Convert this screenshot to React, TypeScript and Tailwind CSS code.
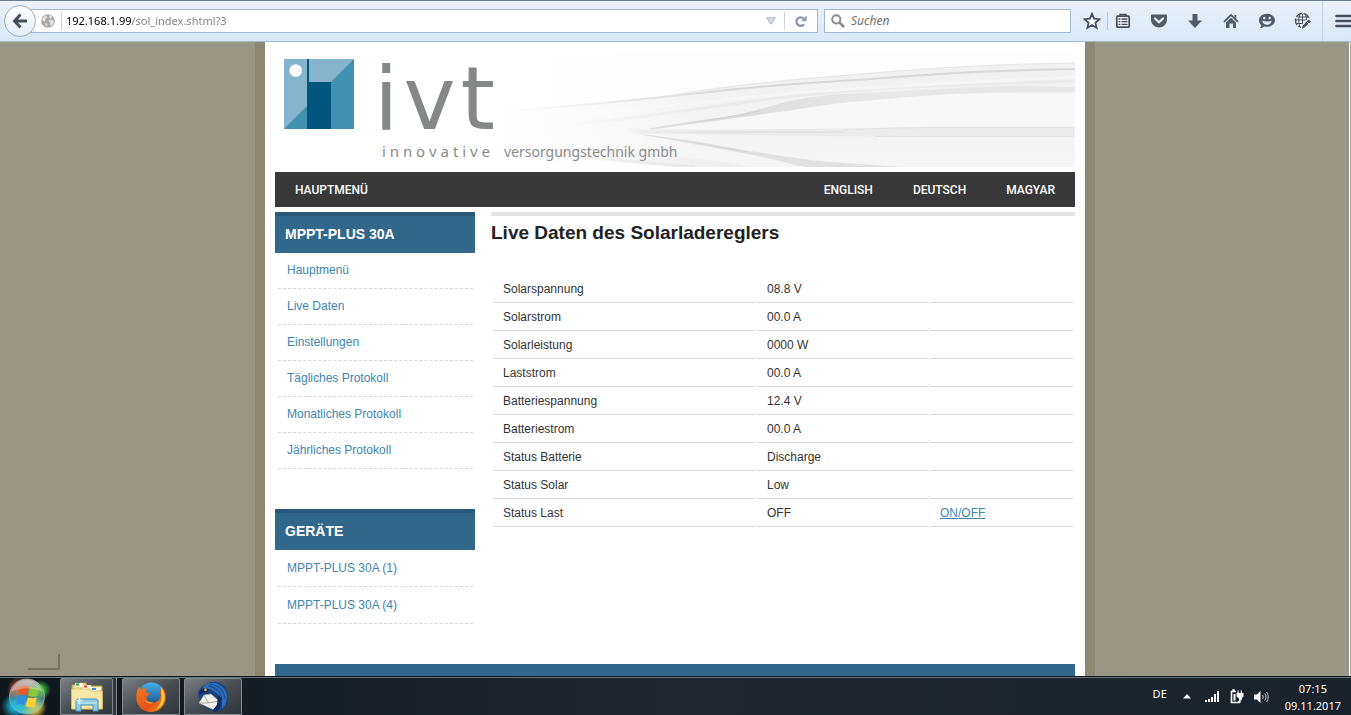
import React, { useState } from 'react';

const NAV_LANGUAGES = ['ENGLISH', 'DEUTSCH', 'MAGYAR'];

const MENU_ITEMS = [
  'Hauptmenü',
  'Live Daten',
  'Einstellungen',
  'Tägliches Protokoll',
  'Monatliches Protokoll',
  'Jährliches Protokoll',
];

const DEVICES = ['MPPT-PLUS 30A (1)', 'MPPT-PLUS 30A (4)'];

const LIVE_DATA = [
  { label: 'Solarspannung', value: '08.8 V' },
  { label: 'Solarstrom', value: '00.0 A' },
  { label: 'Solarleistung', value: '0000 W' },
  { label: 'Laststrom', value: '00.0 A' },
  { label: 'Batteriespannung', value: '12.4 V' },
  { label: 'Batteriestrom', value: '00.0 A' },
  { label: 'Status Batterie', value: 'Discharge' },
  { label: 'Status Solar', value: 'Low' },
  { label: 'Status Last', value: 'OFF', action: 'ON/OFF' },
];

/* ---------- Toolbar icons ---------- */

const BackIcon = () => (
  <svg width="16" height="16" viewBox="0 0 16 16" fill="none" stroke="#46505c" strokeWidth="3">
    <path d="M8.5 1.5 2.5 8l6 6.5M3 8h12" />
  </svg>
);

const GlobeIcon = () => (
  <svg width="14" height="14" viewBox="0 0 14 14">
    <circle cx="7" cy="7" r="6.8" fill="#a8a8a8" />
    <path d="M1 5.5 3 2.500 5.500 1.500 6 3.500 4 5.500 4.500 7 2.500 7.500ZM8 1l3.500 1.500L10 4.500 8.500 4ZM7.500 6.500l3-1 2.500 2-1.500 3.500-2 .5-.5-3ZM3.500 9l2.500.5.500 2-1 1Z" fill="#e6e6e6" />
  </svg>
);

const DropmarkerIcon = () => (
  <svg width="10" height="8" viewBox="0 0 10 8">
    <path d="M.7.8h8.600L5 7.200Z" fill="#d9dfe6" stroke="#aab5c1" />
  </svg>
);

const ReloadIcon = () => (
  <svg width="12" height="13" viewBox="0 0 12 13">
    <path d="M9 9.200A4.200 4.200 0 1 1 8.600 3.600" fill="none" stroke="#8d9baa" strokeWidth="2.400" />
    <path d="M11.600.6v5.600H6Z" fill="#8d9baa" />
  </svg>
);

const SearchIcon = () => (
  <svg width="14" height="14" viewBox="0 0 14 14" fill="none" stroke="#8e8e8e">
    <circle cx="5.300" cy="5.300" r="4.100" strokeWidth="2" />
    <path d="m8.500 8.500 4.500 4.500" strokeWidth="2.600" />
  </svg>
);

const StarIcon = () => (
  <svg width="18" height="18" viewBox="0 0 18 18">
    <path d="m9 1.800 2.100 4.900 5.300.5-4 3.500 1.200 5.200L9 13.100l-4.600 2.800 1.200-5.200-4-3.500 5.300-.5Z" fill="#fafcfe" stroke="#46505c" strokeWidth="1.800" />
  </svg>
);

const ListIcon = () => (
  <svg width="16" height="16" viewBox="0 0 16 16">
    <path d="M5 3V1.500h6V3" fill="none" stroke="#46505c" strokeWidth="1.500" />
    <rect x="1.800" y="3.200" width="12.400" height="11" rx="1" fill="#f2f6fa" stroke="#46505c" strokeWidth="1.700" />
    <path d="M3.500 6h2M6.500 6h6M3.500 8.700h2M6.500 8.700h6M3.500 11.400h2M6.500 11.400h6" stroke="#46505c" strokeWidth="1.300" />
  </svg>
);

const PocketIcon = () => (
  <svg width="18" height="16" viewBox="0 0 18 16">
    <path d="M2 1.500h14a1 1 0 0 1 1 1V7a8 7.500 0 0 1-16 0V2.500a1 1 0 0 1 1-1Z" fill="#4f5b67" />
    <path d="m5 5.500 4 3.800 4-3.800" fill="none" stroke="#eaf2fa" strokeWidth="2.200" strokeLinecap="round" />
  </svg>
);

const DownloadIcon = () => (
  <svg width="16" height="16" viewBox="0 0 16 16">
    <path d="M5.500 1h5v6.500H15L8 15 1 7.500h4.500Z" fill="#4f5b67" />
  </svg>
);

const HomeIcon = () => (
  <svg width="16" height="16" viewBox="0 0 16 16">
    <path d="M1 8.800 8 2l7 6.800" fill="none" stroke="#46505c" strokeWidth="1.700" />
    <path d="M8 4.800 13 9.600V15h-3v-4.500H6.500V15H3V9.600ZM11.500 2h1.800v3.500l-1.800-1.700Z" fill="#4f5b67" />
  </svg>
);

const SmileIcon = () => (
  <svg width="18" height="16" viewBox="0 0 18 16">
    <path d="M9 .8c4.500 0 8 2.800 8 6.500s-3.500 6.500-8 6.500c-1 0-2-.1-2.900-.4-1 1-2.600 1.600-4.100 1.600.7-.8 1.200-1.900 1.200-2.900C1.700 10.900 1 9.200 1 7.300 1 3.600 4.500.8 9 .8Z" fill="#4f5b67" />
    <path d="M4.300 7.800c2.800 1 6.600 1 9.400 0-.5 2.500-2.300 3.900-4.700 3.900S4.800 10.300 4.300 7.800Z" fill="#e4edf6" />
    <circle cx="6.300" cy="5" r="1.200" fill="#e4edf6" />
    <circle cx="11.700" cy="5" r="1.200" fill="#e4edf6" />
  </svg>
);

const GlobePenIcon = () => (
  <svg width="18" height="18" viewBox="0 0 18 18">
    <circle cx="8.500" cy="8.500" r="7" fill="#eef4fa" stroke="#46505c" strokeWidth="1.400" strokeDasharray="7 1.500" />
    <path d="M2 8h13.500M3.500 5h11M3 11.500h8M8.500 2v13M5.800 2.500c-1.400 4-1.400 8 0 12M11.500 2.500c1.200 3 1.300 6 .5 8" fill="none" stroke="#46505c" />
    <path d="M14.500 6.500 18 9.500l-6.500 6L7 18l1-4.500Z" fill="#46505c" stroke="#eef4fa" strokeWidth="1.200" />
    <path d="m13 10 2 2" stroke="#eef4fa" />
  </svg>
);

const MenuIcon = () => (
  <svg width="18" height="14" viewBox="0 0 18 14" className="shrink-0" stroke="#46505c" strokeWidth="2.500" strokeLinecap="round">
    <path d="M1.500 2h15M1.500 7h15M1.500 12h15" />
  </svg>
);

const TOOLBAR_ACTIONS = [
  { name: 'Lesezeichen anzeigen', icon: <ListIcon /> },
  { name: 'Pocket', icon: <PocketIcon /> },
  { name: 'Downloads', icon: <DownloadIcon /> },
  { name: 'Startseite', icon: <HomeIcon /> },
  { name: 'Chat', icon: <SmileIcon /> },
  { name: 'Web-Werkzeuge', icon: <GlobePenIcon /> },
];

const BrowserToolbar = () => {
  const [url, setUrl] = useState('192.168.1.99/sol_index.shtml?3');
  const [query, setQuery] = useState('');

  return (
    <header className="flex h-[42px] shrink-0 items-center overflow-hidden border-t border-b border-t-[#6c7c94] border-b-[#a6bcd2] bg-linear-to-b from-[#eaf1fb] to-[#d9e8f7] pl-1 font-['Noto_Sans','Open_Sans',sans-serif] text-xs">
      <button aria-label="Zurück" className="z-10 flex size-8 shrink-0 items-center justify-center rounded-full border border-[#9aaec4] bg-linear-to-b from-white to-[#e3edf8]">
        <BackIcon />
      </button>
      <div className="-ml-2 flex h-6 min-w-0 flex-1 items-center border border-[#a3b9d0] bg-white pl-3">
        <GlobeIcon />
        <span className="mr-1 ml-1.5 h-[18px] w-px bg-[#cfd3d8]" />
        <input
          type="text"
          aria-label="Adresse"
          value={url}
          onChange={(e) => setUrl(e.target.value)}
          className="min-w-0 flex-1 bg-[linear-gradient(to_right,#000_65px,#7d7d7d_65px)] bg-clip-text text-[11px] text-transparent outline-none"
        />
        <button aria-label="Verlauf" className="px-2">
          <DropmarkerIcon />
        </button>
        <span className="h-[18px] w-px bg-[#cfd3d8]" />
        <button aria-label="Neu laden" className="flex w-8 justify-center">
          <ReloadIcon />
        </button>
      </div>
      <div className="ml-1.5 flex h-6 w-[247px] shrink-0 items-center gap-1.5 border border-[#a3b9d0] bg-white pl-1.5">
        <SearchIcon />
        <input
          type="text"
          aria-label="Suchen"
          placeholder="Suchen"
          value={query}
          onChange={(e) => setQuery(e.target.value)}
          className="min-w-0 flex-1 outline-none placeholder:text-[#6f6f6f] placeholder:italic"
        />
      </div>
      <button aria-label="Lesezeichen hinzufügen" className="ml-1.5 flex w-[30px] shrink-0 justify-center">
        <StarIcon />
      </button>
      <span className="h-[18px] w-px shrink-0 bg-[#b4c6da]" />
      <div className="flex shrink-0 gap-1.5">
        {TOOLBAR_ACTIONS.map((action) => (
          <button key={action.name} aria-label={action.name} className="flex h-5 w-[30px] items-center justify-center">
            {action.icon}
          </button>
        ))}
      </div>
      <span className="ml-1 h-full w-px shrink-0 bg-[#c2d2e4]" />
      <button aria-label="Menü öffnen" className="flex w-7 shrink-0 pl-3">
        <MenuIcon />
      </button>
    </header>
  );
};

/* ---------- Page header ---------- */

const BannerWaves = () => (
  <svg className="absolute inset-0 size-full" viewBox="0 0 800 115" preserveAspectRatio="none">
    <defs>
      <linearGradient id="waveFade" x1="220" x2="450" y1="0" y2="0" gradientUnits="userSpaceOnUse">
        <stop offset="0" stopColor="#fff" />
        <stop offset="1" stopColor="#fff" stopOpacity="0" />
      </linearGradient>
      <linearGradient id="waveBody" x1="0" x2="0" y1="0" y2="1">
        <stop offset="0" stopColor="#f1f1f1" />
        <stop offset="1" stopColor="#f6f6f6" />
      </linearGradient>
      <linearGradient id="bandFill" x1="358" x2="600" y1="0" y2="0" gradientUnits="userSpaceOnUse">
        <stop offset="0" stopColor="#dcdcdc" />
        <stop offset=".5" stopColor="#dedede" />
        <stop offset="1" stopColor="#e7e7e7" />
      </linearGradient>
    </defs>
    <rect width="800" height="115" fill="#fdfdfd" />
    <path d="M200 62C262 57 340 49 397 43C420 40 430 38 443 36C480 31 515 28 550 25S620 19 665 16S750 12 800 11V115H410C360 113 290 106 220 98Z" fill="url(#waveBody)" />
    <path d="M397 43C430 37 500 29 550 25S620 19 665 16S750 12 800 11" fill="none" stroke="#e6e6e6" />
    <path d="M200 62C262 57 340 50 397 44C412 42 428 41 443 39C480 35 515 32 550 30S620 25 665 22S750 18 800 17" fill="none" stroke="#d9d9d9" strokeWidth="2" />
    <path d="M300 72C370 66 440 53 520 44S700 32 800 29" fill="none" stroke="#ebebeb" strokeWidth="3" />
    <path d="M300 63C370 57 440 48 520 41S700 30 800 25" fill="none" stroke="#f6f6f6" strokeWidth="3" />
    <path d="M358 80C420 72 470 63 489 61C505 58 515 58 531 56C550 52 570 50 588 49C630 44 665 42 703 41H800V76H660C560 79 450 80 358 80Z" fill="#f8f8f8" />
    <path d="M358 80C380 75 400 73 420 69C440 66 460 64 473 60C495 55 510 49 531 46S565 42 588 41S690 35 741 34L800 35V40C760 40 730 40 703 41C665 42 630 45 588 49C570 50 550 53 531 56C510 60 500 60 489 62C470 65 390 76 358 80Z" fill="url(#bandFill)" />
    <path d="M370 78C410 70 450 67 485 59" fill="none" stroke="#d2d2d2" />
    <path d="M350 76.500C480 79 560 75.500 660 75.500H799V85H640C560 84 480 83 360 82Z" fill="#ebebeb" />
    <path d="M365 80H569" fill="none" stroke="#dcdcdc" />
    <path d="M569 78C610 76 640 75.500 680 75.500H798.500V84.500H600" fill="none" stroke="#e2e2e2" />
    <path d="M358 81C380 84 400 86 420 89C440 93 458 96 473 99C490 101 500 103 512 105C530 107 540 109 550 109.500C580 112 600 113 626 115H531C515 112 505 109 492 106C460 99 400 89 358 81Z" fill="#e1e1e1" />
    <path d="M370 83C400 87 440 94 473 100" fill="none" stroke="#d4d4d4" />
    <path d="M270 94C350 98 440 108 480 115H410C360 111 310 106 270 102Z" fill="#efefef" />
    <path d="M270 101C320 106 360 110 420 115" fill="none" stroke="#e4e4e4" strokeWidth="3" />
    <rect width="450" height="115" fill="url(#waveFade)" />
  </svg>
);

const LogoMark = () => (
  <svg width="70" height="70" viewBox="0 0 70 70" className="shrink-0">
    <rect width="70" height="70" fill="#86b4cd" />
    <path d="M70 0v70H47V23ZM0 70l23-23v23Z" fill="#4391b0" />
    <path d="M23 0h2v23h22v47H23Z" fill="#00557c" />
    <circle cx="11.700" cy="11.500" r="6.300" fill="#fff" />
  </svg>
);

const Banner = () => (
  <div className="relative h-[115px]">
    <BannerWaves />
    <div className="relative flex gap-5 pt-[7px] pl-[9px] text-[#868789]">
      <LogoMark />
      <div>
        <div className="flex h-[82px] gap-[5px] font-['DejaVu_Sans',Verdana,sans-serif] text-[88px] leading-[80px]">
          <span>i</span>
          <span>v</span>
          <span>t</span>
        </div>
        <p className="flex items-baseline gap-3.5 pl-2 font-['Noto_Sans','Open_Sans',sans-serif] text-sm leading-5 text-[#8a8b8d]">
          <span className="text-[15px]">i n n o v a t i v e</span>
          <span>versorgungstechnik gmbh</span>
        </p>
      </div>
    </div>
  </div>
);

const NavBar = () => (
  <nav className="mt-[5px] flex h-[35px] items-center bg-[#383838] px-5 font-[Roboto,'Open_Sans',sans-serif] text-xs font-medium text-white">
    <a href="#hauptmenu" className="mr-auto">HAUPTMENÜ</a>
    <div className="flex gap-10">
      {NAV_LANGUAGES.map((lang) => (
        <a key={lang} href={`#${lang.toLowerCase()}`}>{lang}</a>
      ))}
    </div>
  </nav>
);

/* ---------- Sidebar ---------- */

interface SideMenuProps {
  title: string;
  items: string[];
  roomy?: boolean;
}

const SideMenu: React.FC<SideMenuProps> = ({ title, items, roomy }) => (
  <section className="mb-10">
    <h2 className="border-t-4 border-[#2a5878] bg-[#31678a] px-2.5 pt-2 pb-2 text-sm leading-[21px] font-bold text-white">{title}</h2>
    <ul className="pr-0.5 pl-[3px] text-xs">
      {items.map((item) => (
        <li key={item} className="border-b border-dashed border-[#d8d8d8]">
          <a href="#item" className={`block px-[9px] pb-2.5 leading-4 text-[#4186ad] ${roomy ? 'pt-2.5' : 'pt-[9px]'}`}>{item}</a>
        </li>
      ))}
    </ul>
  </section>
);

/* ---------- Live data ---------- */

const LiveDataTable = () => (
  <table className="w-full table-fixed border-separate border-spacing-[2px] text-xs text-[#333]">
    <colgroup>
      <col className="w-[262px]" />
      <col className="w-[171px]" />
      <col />
    </colgroup>
    <tbody>
      {LIVE_DATA.map((row) => (
        <tr key={row.label}>
          <td className="border-b border-[#dadada] px-2.5 pt-1 pb-[5px] leading-4">{row.label}</td>
          <td className="border-b border-[#dadada] px-2.5 pt-1 pb-[5px] leading-4">{row.value}</td>
          <td className="border-b border-[#dadada] px-2.5 pt-1 pb-[5px] leading-4">
            {row.action && <a href="#toggle" className="text-[#4186ad] underline">{row.action}</a>}
          </td>
        </tr>
      ))}
    </tbody>
  </table>
);

/* ---------- Taskbar ---------- */

const StartOrb = () => (
  <svg width="56" height="38" viewBox="0 0 56 38">
    <defs>
      <radialGradient id="glowRed"><stop offset="0" stopColor="#f0603a" /><stop offset="1" stopColor="#f0603a" stopOpacity="0" /></radialGradient>
      <radialGradient id="glowGreen"><stop offset="0" stopColor="#3fe03a" /><stop offset="1" stopColor="#3fe03a" stopOpacity="0" /></radialGradient>
      <radialGradient id="glowBlue"><stop offset="0" stopColor="#18c8f0" /><stop offset="1" stopColor="#18c8f0" stopOpacity="0" /></radialGradient>
      <radialGradient id="glowYellow"><stop offset="0" stopColor="#ffe040" /><stop offset="1" stopColor="#ffe040" stopOpacity="0" /></radialGradient>
      <linearGradient id="orb" x1="0" y1="0" x2="0" y2="1">
        <stop offset="0" stopColor="#b9a6a0" />
        <stop offset=".45" stopColor="#6f8078" />
        <stop offset=".55" stopColor="#3f7f86" />
        <stop offset="1" stopColor="#5fc6c8" />
      </linearGradient>
    </defs>
    <circle cx="20" cy="11" r="13" fill="url(#glowRed)" />
    <circle cx="41" cy="12" r="10" fill="url(#glowGreen)" />
    <circle cx="15" cy="28" r="14" fill="url(#glowBlue)" />
    <circle cx="34" cy="29" r="13" fill="url(#glowYellow)" />
    <circle cx="27" cy="18.500" r="17.500" fill="url(#orb)" stroke="#a7b8b4" strokeOpacity=".7" />
    <circle cx="18" cy="12" r="10" fill="url(#glowRed)" opacity=".6" />
    <circle cx="38" cy="13" r="9" fill="url(#glowGreen)" opacity=".7" />
    <circle cx="18" cy="27" r="12" fill="url(#glowBlue)" opacity=".8" />
    <circle cx="34" cy="29" r="11" fill="url(#glowYellow)" opacity=".7" />
    <path d="M20.500 8.500c3-1.500 6-1.300 8.500.2l-2.200 8.300c-2.700-1.300-5.500-1.300-8.300-.1Z" fill="#ee5a24" />
    <path d="M30.200 9.300c3 1.500 6 1.500 9.300.2L37.200 18c-3 1.200-6 1.100-9.100-.3Z" fill="#8cc63f" />
    <path d="M18.200 18.300c2.800-1.300 5.500-1.200 8.300.1L24.300 27c-2.700-1.300-5.500-1.200-8.300 0Z" fill="#2f8fe0" />
    <path d="M27.800 19.200c3 1.400 6 1.500 9 .3l-2.200 8.800c-3 1.200-6 1.100-9-.4Z" fill="#fdd03b" />
    <path d="M11 14C14 5 22 2 27 2S40 5 43 14C33 9 21 9 11 14Z" fill="#fff" opacity=".3" />
  </svg>
);

const ExplorerIcon = () => (
  <svg width="34" height="32" viewBox="0 0 34 32">
    <path d="M2 4h7l1-2h6l1 3h15v23H2Z" fill="#ecd98a" stroke="#b89b45" />
    <path d="M5 2h8v4H5Z" fill="#fbf6dc" />
    <path d="M6 2.500h3v2H6Z" fill="#1fa53a" />
    <path d="M13 4h8v4h-8Z" fill="#fbf6dc" />
    <path d="M14 4.500h3v2h-3Z" fill="#d94030" />
    <path d="M21 6h10v4H21Z" fill="#fbf6dc" />
    <path d="M22 7h4v2h-4Z" fill="#3a8fe0" />
    <path d="M1.500 8h18l2 2h11v18H1.500Z" fill="#f7e7a5" stroke="#d3ba66" strokeWidth=".7" />
    <path d="M6 30V20c0-1 1-2 2-2h18c1 0 2 1 2 2v10h-5v-6H11v6Z" fill="#8ecbea" stroke="#4a93bd" />
    <path d="M7 22h20" stroke="#d9f2fd" />
    <path d="m9.500 15 .7 3.800 3.800.7-3.800.7-.7 3.800-.7-3.800-3.800-.7 3.800-.7Z" fill="#fff" />
  </svg>
);

const FirefoxIcon = () => (
  <svg width="32" height="32" viewBox="0 0 32 32">
    <defs>
      <linearGradient id="foxBody" x1="0" y1="0" x2="1" y2="1">
        <stop offset="0" stopColor="#f08020" />
        <stop offset=".6" stopColor="#e4501c" />
        <stop offset="1" stopColor="#f9a01e" />
      </linearGradient>
      <linearGradient id="foxGlobe" x1="0" y1="0" x2="0" y2="1">
        <stop offset="0" stopColor="#46b2e8" />
        <stop offset="1" stopColor="#123e80" />
      </linearGradient>
    </defs>
    <circle cx="16.500" cy="15" r="13.500" fill="url(#foxGlobe)" />
    <path d="M25 4c5 4 6.500 9 5.500 15-1.500 7-7 12-14.500 12S2.500 26 1.500 19C.8 13 2 8.500 4.500 5c0 1.500.3 2.500 1 3.500C8 7 9.500 7 12 7.500c-1 1.500-1.500 2.500-1.500 3.500l4 1c.5 1.500-.5 2.500-3 3.500-.5 3 1.500 5.500 4.500 6 4.500.8 9-2 9.500-7 .2-2-.5-4-1.500-5.500 1.500 0 2.500.5 3.500 2C27.500 8.500 26.500 6 25 4Z" fill="url(#foxBody)" />
    <path d="M26 6c4 5 4.500 10 2.500 15-1.500 3.500-4 6-7 7 4-4 5.500-9 5-13.500-.3-3-.3-5.500-.5-8.500Z" fill="#fcd536" />
    <path d="M9.500 19c3 1 5.500 2.500 9 2.500-2 2-6.500 1.500-9-2.500Z" fill="#f59a24" />
  </svg>
);

const ThunderbirdIcon = () => (
  <svg width="34" height="32" viewBox="0 0 34 32">
    <path d="M2 12C3 7 7 5 10 3.500 13 1 17 .5 20 1c7 1 12 7 12 14 0 6-1.500 10-4.500 13.500L20 31l-8-3C7 26 3 19 2 12Z" fill="#17417f" />
    <path d="M17 1.500C24 2 31 8 31 16c0 5-2 9-5 12 1-8-1-14-9-18C14 7 9 7 5 10c2-5 6-8.500 12-8.500Z" fill="#2f6fb8" />
    <path d="M14 3c8 1 14 6 15 15M12 5c8 1 13 6 14 14" fill="none" stroke="#1a4c92" strokeWidth="1.200" />
    <path d="m8 14 7-1 8 7-5 9L3 22Z" fill="#f3f1ec" stroke="#aaa6a0" strokeWidth=".6" />
    <path d="m8 14 4.500 8L23 20M3 22l9.500 0" fill="none" stroke="#aaa6a0" />
    <path d="M5 9c2-2 5-2.500 8-.5-1 2-3 3-5 3L3.500 13Z" fill="#0e2a5c" />
    <circle cx="9.500" cy="8.700" r="1.300" fill="#e9c443" />
    <path d="m22 14 4 3-3 11-4 3-3-1 5-6Z" fill="#102f66" />
  </svg>
);

const SignalIcon = () => (
  <svg width="15" height="12" viewBox="0 0 15 12" fill="#fff">
    <path d="M0 9h2v2H0ZM3 8h2v3H3ZM6 6h2v5H6ZM9 3h2v8H9ZM12 0h2v11h-2Z" />
  </svg>
);

const PowerIcon = () => (
  <svg width="14" height="15" viewBox="0 0 14 15">
    <path d="M6 2.500H4V1H3v1.500H1.500v11H9V12" fill="none" stroke="#fff" strokeWidth="1.600" />
    <path d="M3.500 5h2v6.500h-2Z" fill="#fff" />
    <path d="M7.500 1.500h1.200V4h2V1.500h1.200V4h1.600v3.500L11.800 9.500v1.700H10.600V14H9V9.500L6.500 7.500V4h1Z" fill="#fff" />
  </svg>
);

const VolumeIcon = () => (
  <svg width="15" height="14" viewBox="0 0 15 14">
    <path d="M0 4.500h3L6.500 1v12L3 9.500H0Z" fill="#fff" />
    <path d="M8.500 5c1 1.200 1 2.800 0 4M10.700 3.500c1.700 2 1.700 5 0 7M12.500 2c2.300 3 2.300 7 0 10" fill="none" stroke="#c4c9cd" />
  </svg>
);

const TASKBAR_BUTTON =
  'flex h-full items-center justify-center rounded-t-xs border border-[#858b91] bg-linear-to-br from-[#7b8085] via-[#474d53] to-[#30363c]';

const Taskbar = () => (
  <footer className="flex h-[39px] shrink-0 items-stretch border-t border-[#12181f] bg-linear-to-r from-[#0f171d] via-[#202730] to-[#1a222b] font-['Noto_Sans','Open_Sans',sans-serif] text-[11px] text-white">
    <div className="flex w-full border-t border-[#68727b]">
      <button aria-label="Start" className="mr-1 w-14 shrink-0">
        <StartOrb />
      </button>
      <div className="flex gap-1">
        <div className="flex pr-px">
          <button aria-label="Windows-Explorer" className={`${TASKBAR_BUTTON} w-[53px]`}>
            <ExplorerIcon />
          </button>
          <span className="w-1 border-r border-[#858b91] bg-[#30363c]" />
        </div>
        <button aria-label="Firefox" className={`${TASKBAR_BUTTON} w-[58px]`}>
          <FirefoxIcon />
        </button>
        <button aria-label="Thunderbird" className={`${TASKBAR_BUTTON} w-[58px]`}>
          <ThunderbirdIcon />
        </button>
      </div>
      <div className="ml-auto flex items-center pr-2.5">
        <span className="pb-1">DE</span>
        <button aria-label="Ausgeblendete Symbole einblenden" className="mr-3.5 ml-4">
          <svg width="8" height="5" viewBox="0 0 8 5"><path d="M4 0 8 4.500H0Z" fill="#fff" /></svg>
        </button>
        <div className="flex items-center gap-2.5">
          <SignalIcon />
          <PowerIcon />
          <VolumeIcon />
        </div>
        <div className="ml-4 text-center leading-[17px]">
          <div>07:15</div>
          <div>09.11.2017</div>
        </div>
      </div>
    </div>
  </footer>
);

export default function App() {
  return (
    <div className="flex h-screen flex-col overflow-hidden">
      <BrowserToolbar />

      <div className="relative min-h-0 flex-1 overflow-hidden bg-[#9a9685] pr-px font-['Liberation_Sans',Arial,sans-serif]">
        <div className="mx-auto min-h-full w-full max-w-[840px] border-x-[10px] border-[#8c8874] bg-white p-2.5">
          <Banner />
          <NavBar />
          <div className="mt-[5px] flex gap-4">
            <aside className="w-[200px] shrink-0">
              <SideMenu title="MPPT-PLUS 30A" items={MENU_ITEMS} />
              <SideMenu title="GERÄTE" items={DEVICES} roomy />
            </aside>
            <main className="min-w-0 flex-1 border-t-4 border-[#e5e5e5]">
              <h1 className="mb-[25px] text-[19px] leading-[34px] font-bold text-[#222]">Live Daten des Solarladereglers</h1>
              <LiveDataTable />
            </main>
          </div>
          <div className="h-10 bg-[#31678a]" />
        </div>

        {/* Scrollbar edge */}
        <div className="absolute inset-y-0 right-0 w-0.5 border-r border-[#a9a9a9] bg-white" />

        {/* Leftover window corner above the start button */}
        <div className="absolute bottom-1.5 left-7 h-4 w-8 rounded-br-xs border-r-2 border-b-2 border-[#76735f]" />
      </div>

      <Taskbar />
    </div>
  );
}
